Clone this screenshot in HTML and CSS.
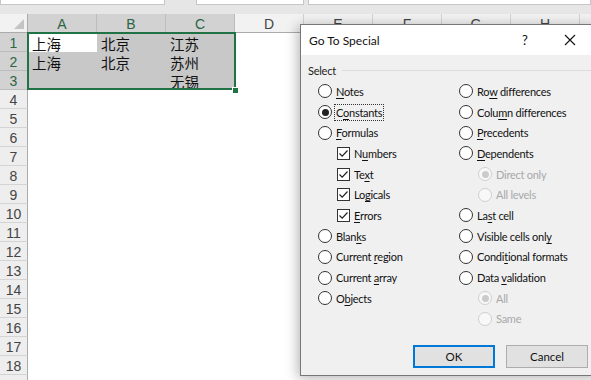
FILE: index.html
```html
<!DOCTYPE html>
<html lang="en">
<head>
<meta charset="UTF-8">
<title>Go To Special</title>
<link rel="stylesheet" href="styles.css">
</head>
<body>
<div class="topbar">
    <div class="box box-name"></div>
    <div class="box box-fx"></div>
    <div class="box box-formula"></div>
</div>
<div class="sheet">
    <div class="corner"><span class="tri"></span></div>
    <div class="col-head on">A</div>
    <div class="col-head on">B</div>
    <div class="col-head on">C</div>
    <div class="col-head">D</div>
    <div class="col-head">E</div>
    <div class="col-head">F</div>
    <div class="col-head">G</div>
    <div class="col-head">H</div>
    <div class="col-head">I</div>

    <div class="row-head on">1</div>
    <div class="block">
        <div class="cell active">上海</div>
        <div class="cell">北京</div>
        <div class="cell">江苏</div>
        <div class="cell">上海</div>
        <div class="cell">北京</div>
        <div class="cell">苏州</div>
        <div class="cell"></div>
        <div class="cell"></div>
        <div class="cell">无锡</div>
        <span class="handle"></span>
    </div>
    <div class="rest"></div>
    <div class="row-head on">2</div><div class="rest"></div>
    <div class="row-head on">3</div><div class="rest"></div>

    <div class="row-head">4</div><div class="rest full"></div>
    <div class="row-head">5</div><div class="rest full"></div>
    <div class="row-head">6</div><div class="rest full"></div>
    <div class="row-head">7</div><div class="rest full"></div>
    <div class="row-head">8</div><div class="rest full"></div>
    <div class="row-head">9</div><div class="rest full"></div>
    <div class="row-head">10</div><div class="rest full"></div>
    <div class="row-head">11</div><div class="rest full"></div>
    <div class="row-head">12</div><div class="rest full"></div>
    <div class="row-head">13</div><div class="rest full"></div>
    <div class="row-head">14</div><div class="rest full"></div>
    <div class="row-head">15</div><div class="rest full"></div>
    <div class="row-head">16</div><div class="rest full"></div>
    <div class="row-head">17</div><div class="rest full"></div>
    <div class="row-head">18</div><div class="rest full"></div>
    <div class="row-head">19</div><div class="rest full"></div>
</div>

<div class="dialog">
    <div class="dlg-title">
        <span class="dlg-name">Go To Special</span>
        <span class="help">?</span>
        <span class="close">
            <svg width="12" height="12" viewBox="0 0 12 12"><path d="M1 1 L11 11 M11 1 L1 11" stroke="#111" stroke-width="1.1" fill="none"/></svg>
        </span>
    </div>
    <div class="dlg-body">
        <div class="group-label"><span>Select</span><span class="groove"></span></div>
        <div class="options">
            <div class="col">
                <div class="opt"><span class="radio"></span><span><u>N</u>otes</span></div>
                <div class="opt"><span class="radio checked"></span><span class="focus">C<u>o</u>nstants</span></div>
                <div class="opt"><span class="radio"></span><span><u>F</u>ormulas</span></div>
                <div class="opt sub"><span class="check"><svg width="11" height="11" viewBox="0 0 11 11"><path d="M1.5 5.5 L4.2 8.2 L9.5 2.5" stroke="#222" stroke-width="1.2" fill="none"/></svg></span><span>N<u>u</u>mbers</span></div>
                <div class="opt sub"><span class="check"><svg width="11" height="11" viewBox="0 0 11 11"><path d="M1.5 5.5 L4.2 8.2 L9.5 2.5" stroke="#222" stroke-width="1.2" fill="none"/></svg></span><span>Te<u>x</u>t</span></div>
                <div class="opt sub"><span class="check"><svg width="11" height="11" viewBox="0 0 11 11"><path d="M1.5 5.5 L4.2 8.2 L9.5 2.5" stroke="#222" stroke-width="1.2" fill="none"/></svg></span><span>Lo<u>g</u>icals</span></div>
                <div class="opt sub"><span class="check"><svg width="11" height="11" viewBox="0 0 11 11"><path d="M1.5 5.5 L4.2 8.2 L9.5 2.5" stroke="#222" stroke-width="1.2" fill="none"/></svg></span><span><u>E</u>rrors</span></div>
                <div class="opt"><span class="radio"></span><span>Blan<u>k</u>s</span></div>
                <div class="opt"><span class="radio"></span><span>Current <u>r</u>egion</span></div>
                <div class="opt"><span class="radio"></span><span>Current <u>a</u>rray</span></div>
                <div class="opt"><span class="radio"></span><span>O<u>b</u>jects</span></div>
            </div>
            <div class="col">
                <div class="opt"><span class="radio"></span><span>Ro<u>w</u> differences</span></div>
                <div class="opt"><span class="radio"></span><span>Colu<u>m</u>n differences</span></div>
                <div class="opt"><span class="radio"></span><span><u>P</u>recedents</span></div>
                <div class="opt"><span class="radio"></span><span><u>D</u>ependents</span></div>
                <div class="opt sub off"><span class="radio checked"></span><span>Direct only</span></div>
                <div class="opt sub off"><span class="radio"></span><span>All levels</span></div>
                <div class="opt"><span class="radio"></span><span>La<u>s</u>t cell</span></div>
                <div class="opt"><span class="radio"></span><span>Visible cells onl<u>y</u></span></div>
                <div class="opt"><span class="radio"></span><span>Condi<u>t</u>ional formats</span></div>
                <div class="opt"><span class="radio"></span><span>Data <u>v</u>alidation</span></div>
                <div class="opt sub off"><span class="radio checked"></span><span>All</span></div>
                <div class="opt sub off"><span class="radio"></span><span>Same</span></div>
            </div>
        </div>
        <div class="buttons">
            <button class="btn btn-ok">OK</button>
            <button class="btn">Cancel</button>
        </div>
    </div>
</div>
</body>
</html>
```

FILE: styles.css
```css
* {
    box-sizing: border-box;
}

body {
    margin: 0;
    width: 591px;
    height: 380px;
    overflow: hidden;
    position: relative;
    background-color: #fff;
    font-family: Lato, "Noto Sans", sans-serif;
}

/* formula bar strip */
.topbar {
    height: 14px;
    background-color: #e6e6e6;
    display: flex;
}
.box {
    height: 5px;
    background-color: #fff;
    border: 1px solid #c6c6c6;
    border-top: none;
}
.box-name {
    width: 165px;
}
.box-fx {
    width: 108px;
    margin-left: 31px;
}
.box-formula {
    flex: 1;
    margin-left: 4px;
}

/* worksheet */
.sheet {
    display: grid;
    grid-template-columns: 28px repeat(9, 69px);
    grid-auto-rows: 19px;
    font-family: "Liberation Sans", Arial, sans-serif;
}

.corner {
    background-color: #f2f2f2;
    border-right: 1px solid #ababab;
    border-bottom: 1px solid #ababab;
    display: flex;
    justify-content: flex-end;
    align-items: flex-end;
    padding: 0 3px 3px 0;
}
.tri {
    width: 0;
    height: 0;
    border-left: 10px solid transparent;
    border-bottom: 10px solid #c4c4c4;
}

.col-head {
    background-color: #f2f2f2;
    border-right: 1px solid #d4d4d4;
    border-bottom: 1px solid #ababab;
    display: flex;
    justify-content: center;
    align-items: center;
    font-size: 14px;
    color: #444;
    padding-top: 1px;
}
.row-head {
    background-color: #eeeeee;
    border-right: 1px solid #ababab;
    border-bottom: 1px solid #d4d4d4;
    display: flex;
    justify-content: center;
    align-items: center;
    font-size: 14px;
    color: #444;
    padding-top: 1px;
}
.col-head.on,
.row-head.on {
    background-color: #d2d2d2;
    color: #2c6444;
}
.col-head.on {
    border-right-color: #bcbcbc;
}
.row-head.on {
    border-bottom-color: #bcbcbc;
}

/* selected range A1:C3 */
.block {
    grid-column: 2 / 5;
    grid-row: 2 / 5;
    display: grid;
    grid-template-columns: repeat(3, 69px);
    grid-auto-rows: 19px;
    background-color: #c8c8c8;
    position: relative;
}
.block::after {
    content: "";
    position: absolute;
    top: -1px;
    left: -1px;
    right: -1px;
    bottom: 0;
    border: 2px solid #217346;
}
.handle {
    position: absolute;
    right: -4px;
    bottom: -4px;
    width: 7px;
    height: 7px;
    background-color: #217346;
    border: 1px solid #fff;
    z-index: 1;
}

.cell {
    font-family: "Noto Sans CJK SC", sans-serif;
    font-size: 14.5px;
    line-height: 17px;
    color: #111;
    padding-left: 4px;
    display: flex;
    align-items: flex-end;
}
.cell.active {
    background-color: #fff;
}

.rest {
    grid-column: span 6;
}
.rest.full {
    grid-column: span 9;
}

/* dialog */
.dialog {
    position: absolute;
    left: 300px;
    top: 24px;
    width: 300px;
    height: 352px;
    background-color: #f0f0f0;
    border: 1px solid #777;
    box-shadow: -2px 2px 12px rgba(0, 0, 0, 0.3);
    font-size: 11px;
    letter-spacing: -0.25px;
    color: #111;
}

.dlg-title {
    height: 30px;
    background-color: #fff;
    display: flex;
    align-items: center;
    padding-left: 8px;
}
.dlg-name {
    font-size: 12px;
    letter-spacing: 0;
    flex: 1;
}
.help {
    font-size: 13px;
    width: 10px;
    margin-right: 32px;
}
.close {
    display: flex;
    width: 30px;
    margin-right: 5px;
}

.dlg-body {
    padding-top: 8px;
}

.group-label {
    height: 14px;
    display: flex;
    align-items: center;
    padding-left: 7px;
    color: #222;
}
.groove {
    flex: 1;
    height: 1px;
    margin-left: 6px;
    margin-top: 1px;
    background-color: #dcdcdc;
}

.options {
    display: flex;
    margin-top: 4px;
}
.col {
    display: flex;
    flex-direction: column;
}
.col:first-child {
    width: 158px;
    padding-left: 17px;
}
.opt {
    height: 20.7px;
    display: flex;
    align-items: center;
    gap: 4px;
    white-space: nowrap;
}
.opt.sub {
    padding-left: 19px;
}
.opt.off {
    color: #a8a8a8;
}

.radio {
    width: 14px;
    height: 14px;
    border-radius: 50%;
    border: 1px solid #333;
    background-color: #fff;
    display: flex;
    justify-content: center;
    align-items: center;
}
.radio.checked::after {
    content: "";
    width: 7px;
    height: 7px;
    border-radius: 50%;
    background-color: #222;
}
.off .radio {
    border-color: #cfcfcf;
    background-color: #f8f8f8;
}
.off .radio.checked::after {
    background-color: #cbcbcb;
}

.check {
    width: 13px;
    height: 13px;
    border: 1px solid #333;
    background-color: #fff;
    display: flex;
    justify-content: center;
    align-items: center;
}

.focus {
    outline: 1px dotted #333;
    padding: 1px 1px;
    margin-left: -1px;
}

u {
    text-underline-offset: 2px;
}

.buttons {
    display: flex;
    gap: 11px;
    padding-left: 112px;
    margin-top: 16px;
}
.btn {
    width: 82px;
    height: 23px;
    font-family: Lato, "Noto Sans", sans-serif;
    font-size: 11.5px;
    color: #111;
    background-color: #e1e1e1;
    border: 1px solid #adadad;
    padding: 0;
}
.btn-ok {
    border: 2px solid #0078d7;
}
```
